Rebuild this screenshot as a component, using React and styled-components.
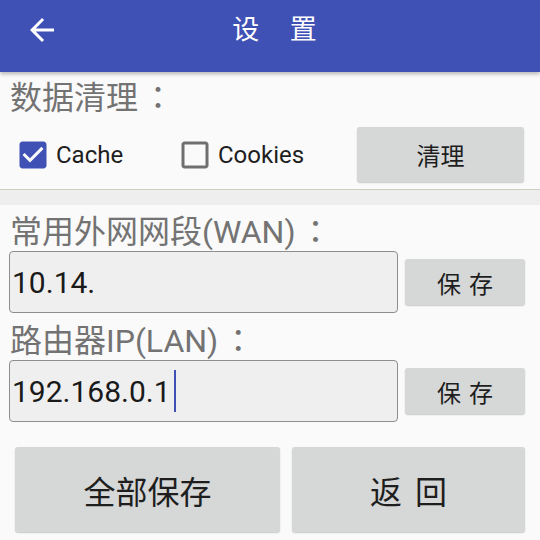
import React from "react";
import styled, { createGlobalStyle } from "styled-components";

const Global = createGlobalStyle`
  html, body { margin: 0; padding: 0; background: #fafafa; }
  body { font-family: Roboto, "Noto Sans CJK SC", sans-serif; }
  * { box-sizing: border-box; }
`;

const Page = styled.div`
  width: 540px;
  height: 540px;
  background: #fafafa;
  overflow: hidden;
  display: flex;
  flex-direction: column;
`;

const AppBar = styled.header`
  position: relative;
  z-index: 2;
  height: 72px;
  flex: none;
  padding-top: 12px;
  background: #3f51b5;
  box-shadow: 0 2px 4px rgba(0, 0, 0, 0.28);
  display: grid;
  grid-template-columns: 1fr auto 1fr;
  align-items: start;
`;

const BackButton = styled.button`
  justify-self: start;
  margin-left: 24px;
  width: 36px;
  height: 36px;
  padding: 0;
  border: none;
  background: transparent;
  display: flex;
  color: #fff;
`;

const Title = styled.h1`
  margin: 0;
  padding-left: 9px;
  color: #fff;
  font-size: 27px;
  font-weight: 400;
  word-spacing: 24px;
  line-height: 36px;
`;

const Label = styled.div`
  margin: ${(p) => p.$top}px 0 0 10px;
  height: 36px;
  line-height: 36px;
  font-size: 32px;
  color: #737373;
  white-space: nowrap;
`;

const Colon = styled.span`
  font-family: "Noto Sans CJK JP", sans-serif;
  margin-left: 4px;
`;

const CheckRow = styled.div`
  margin-top: 14px;
  height: 55px;
  display: flex;
  align-items: center;
  padding-left: 15px;
  padding-right: 16px;
`;

const CheckItem = styled.label`
  flex: 0 0 162px;
  display: flex;
  align-items: center;
  gap: 5px;
  font-size: 24px;
  color: #1e1e1e;
`;

const Button = styled.button`
  border: none;
  border-radius: 3px;
  background: #d6d7d7;
  box-shadow: 0 1px 1.5px rgba(0, 0, 0, 0.2);
  color: #1e1e1e;
  font-family: Roboto, "Noto Sans CJK SC", sans-serif;
  font-size: ${(p) => p.$size || 24}px;
  word-spacing: ${(p) => p.$ws || 0}px;
  padding: 0;
  cursor: pointer;
`;

const ClearButton = styled(Button)`
  margin-left: auto;
  width: 167px;
  height: 55px;
`;

const Divider = styled.div`
  margin-top: 7px;
  height: 16px;
  flex: none;
  border-top: 1px solid #cfcfbf;
  background: #eeeeee;
`;

const FieldRow = styled.div`
  margin-top: 4px;
  display: flex;
  align-items: center;
  gap: 7px;
  padding: 0 15px 0 9px;
`;

const Field = styled.div`
  width: 389px;
  height: 62px;
  border: 1px solid #8e8e8e;
  border-radius: 4px;
  background: #efefef;
  display: flex;
  align-items: center;
  padding-left: 2px;
  font-size: 30px;
  color: #1a1a1a;
  white-space: nowrap;
`;

const Caret = styled.span`
  display: inline-block;
  width: 2px;
  height: 42px;
  margin-left: 3px;
  background: #3f51b5;
`;

const SaveButton = styled(Button)`
  flex: 1;
  height: 46px;
`;

const BottomRow = styled.div`
  margin-top: 25px;
  display: flex;
  gap: 12px;
  padding: 0 15px;
`;

const BigButton = styled(Button)`
  flex: ${(p) => p.$grow};
  height: 85px;
`;

const CheckIcon = ({ checked }) => (
  <svg width="36" height="36" viewBox="0 0 24 24">
    {checked ? (
      <path
        fill="#3f51b5"
        d="M19 3H5c-1.11 0-2 .9-2 2v14c0 1.1.89 2 2 2h14c1.11 0 2-.9 2-2V5c0-1.1-.89-2-2-2zm-9 14l-5-5 1.41-1.41L10 14.17l7.59-7.59L19 8l-9 9z"
      />
    ) : (
      <path
        fill="#6f6f6f"
        d="M19 5v14H5V5h14m0-2H5c-1.1 0-2 .9-2 2v14c0 1.1.9 2 2 2h14c1.1 0 2-.9 2-2V5c0-1.1-.9-2-2-2z"
      />
    )}
  </svg>
);

export default function App() {
  return (
    <Page>
      <Global />
      <AppBar>
        <BackButton aria-label="返回">
          <svg width="36" height="36" viewBox="0 0 24 24">
            <path fill="#fff" d="M20 11H7.83l5.59-5.59L12 4l-8 8 8 8 1.41-1.41L7.83 13H20v-2z" />
          </svg>
        </BackButton>
        <Title>设 置</Title>
        <span />
      </AppBar>

      <Label $top={5}>
        数据清理<Colon>：</Colon>
      </Label>
      <CheckRow>
        <CheckItem>
          <CheckIcon checked />
          Cache
        </CheckItem>
        <CheckItem>
          <CheckIcon />
          Cookies
        </CheckItem>
        <ClearButton>清理</ClearButton>
      </CheckRow>
      <Divider />

      <Label $top={6}>
        常用外网网段(WAN)<Colon>：</Colon>
      </Label>
      <FieldRow>
        <Field>10.14.</Field>
        <SaveButton $ws={2}>保 存</SaveButton>
      </FieldRow>

      <Label $top={7}>
        路由器IP(LAN)<Colon>：</Colon>
      </Label>
      <FieldRow>
        <Field>
          192.168.0.1
          <Caret />
        </Field>
        <SaveButton $ws={2}>保 存</SaveButton>
      </FieldRow>

      <BottomRow>
        <BigButton $grow={265} $size={32}>全部保存</BigButton>
        <BigButton $grow={233} $size={32} $ws={5}>返 回</BigButton>
      </BottomRow>
    </Page>
  );
}
